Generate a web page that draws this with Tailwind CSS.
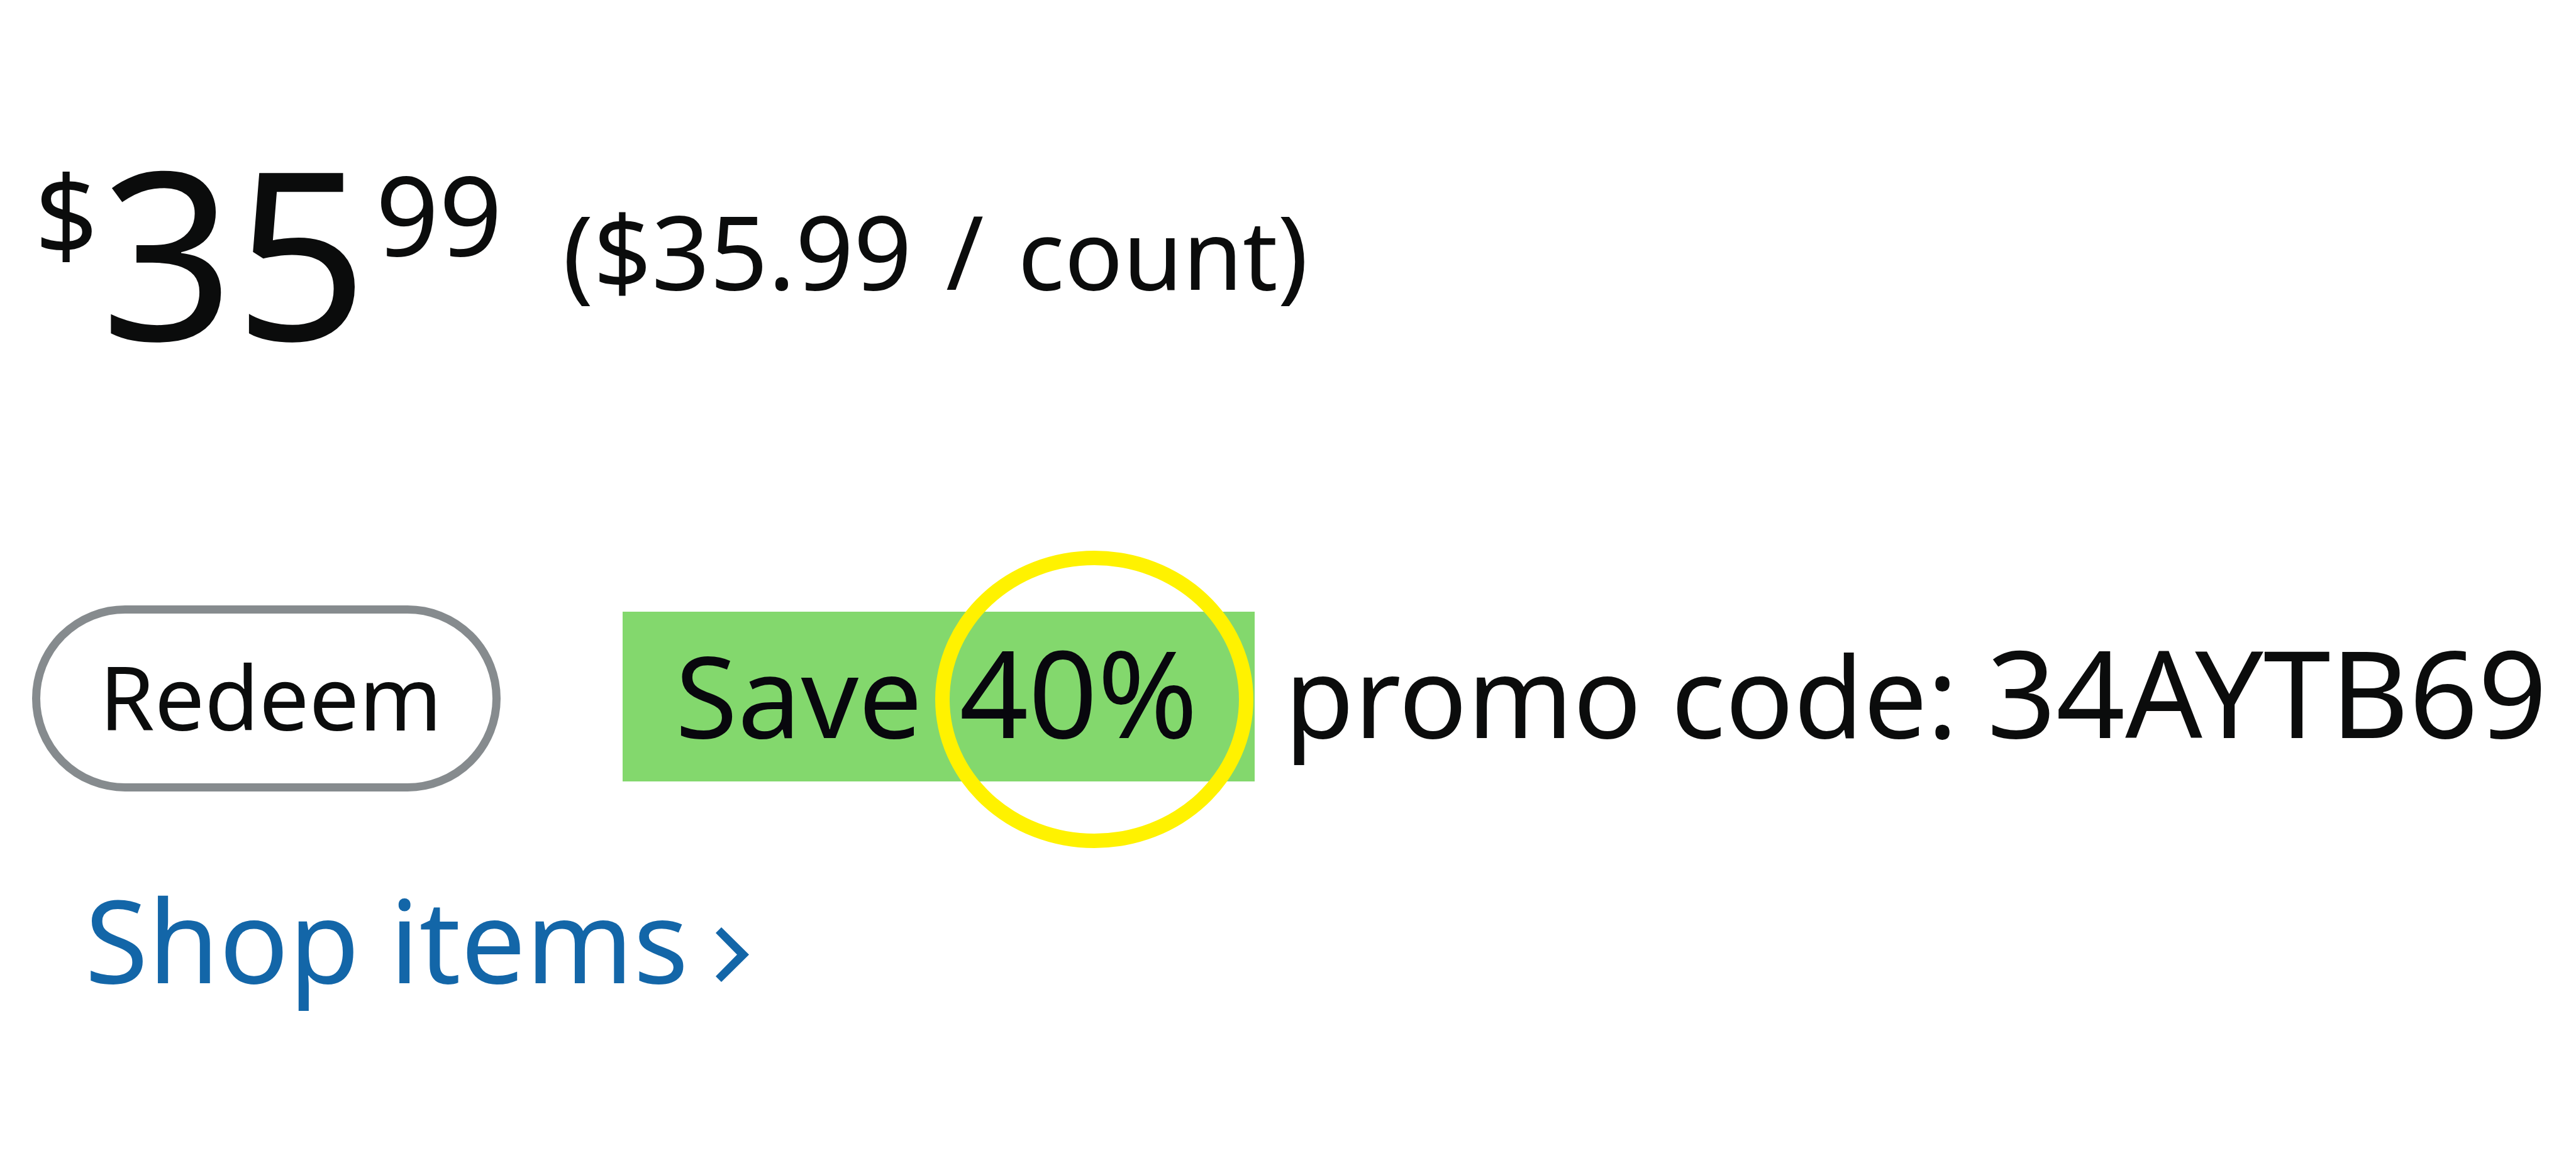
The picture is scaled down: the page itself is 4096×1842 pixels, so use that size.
<!DOCTYPE html>
<html lang="en">
<head>
<meta charset="utf-8">
<title>Price and promotion</title>
<script src="https://cdn.jsdelivr.net/npm/@tailwindcss/browser@4"></script>
</head>
<body class="min-h-screen overflow-x-hidden bg-white font-['Noto_Sans',sans-serif] text-[#0b0c0c]">
<main class="flex flex-col items-start pt-[211px] pl-[51px] whitespace-nowrap">
  <!-- Price -->
  <section class="flex items-start pl-1" aria-label="Price">
    <span class="mt-10 text-[176px] leading-none">$</span>
    <span class="ml-1 text-[372px] leading-none">35</span>
    <span class="ml-3 mt-10 text-[176px] leading-none">99</span>
    <span class="ml-24 mt-[106px] text-[162px] leading-none">($35.99 <span class="mx-3">/</span> <span class="text-[154px]">count</span>)</span>
  </section>

  <!-- Promotion -->
  <section class="mt-[380px] flex items-start" aria-label="Promotion">
    <button type="button" class="h-[296px] rounded-full border-[13px] border-[#868b8e] bg-white pb-2 pl-[94px] pr-20 text-[141px] leading-none">Redeem</button>
    <p class="ml-[194px] mt-[10px] flex items-baseline text-[180px] leading-[254px]">
      <mark class="relative bg-[#83d86d] pb-[11px] pl-[84px] pr-[90px] text-[#08070d]">Save <span class="ml-3 text-[192px]">40%</span><span class="absolute -top-[97px] right-[2px] h-[473px] w-[506px] rounded-[50%] border-[23px] border-[#fff200]"></span></mark>
      <span class="ml-12">promo code: <span class="text-[192px]">34AYTB69</span></span>
    </p>
  </section>

  <a href="#" class="ml-[84px] mt-[143px] flex items-start text-[183px] leading-none text-[#1366a8]">Shop items
    <svg class="ml-[43px] mt-[73px] h-[87px] w-[53px]" viewBox="0 0 53 87" fill="currentColor" aria-hidden="true"><path d="M9 0 53 43.500 9 87 0 78 34 43.500 0 9Z"/></svg>
  </a>
</main>
</body>
</html>
